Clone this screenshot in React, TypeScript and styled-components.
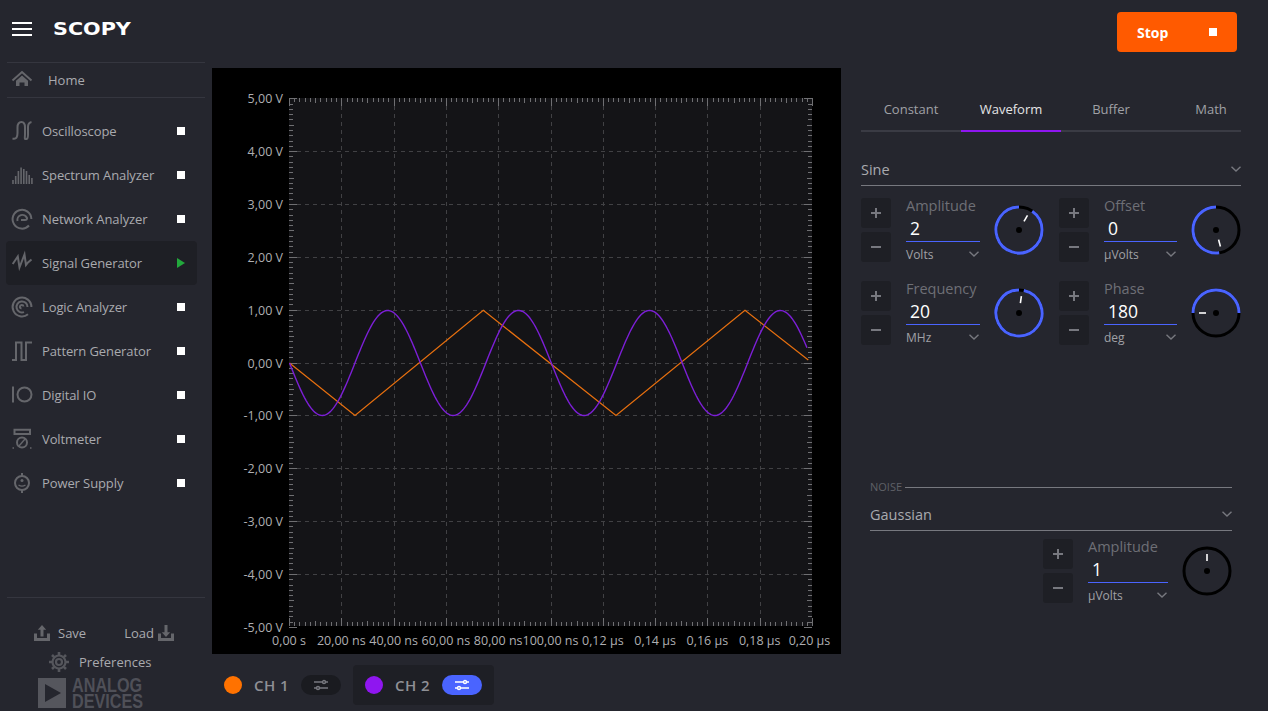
import React from "react";
import styled, { createGlobalStyle } from "styled-components";

const Global = createGlobalStyle`
  html, body { margin: 0; padding: 0; background: #25262e; }
  body { width: 1268px; height: 711px; overflow: hidden; font-family: "Open Sans", "Noto Sans", sans-serif; }
  * { box-sizing: border-box; }
`;

const ICON = "#65666b";
const BLUE = "#4a64ff";
const PURPLE = "#8f16f0";
const ORANGE = "#ff7200";

const Page = styled.div`
  display: grid;
  grid-template-columns: 212px 1fr;
  width: 1268px;
  height: 711px;
  background: #25262e;
  overflow: hidden;
`;

/* Sidebar */
const Sidebar = styled.aside`
  display: flex;
  flex-direction: column;
  height: 711px;
`;
const Brand = styled.div`
  display: flex;
  align-items: center;
  height: 63px;
  margin: 0 7px;
  padding: 0 5px 5px;
  gap: 21px;
  border-bottom: 1px solid #35363f;
`;
const Burger = styled.div`
  display: flex;
  flex-direction: column;
  gap: 4px;
  width: 20px;
  span { display: block; height: 2px; background: #fff; }
`;
const Wordmark = styled.div`
  font-family: "DejaVu Sans", sans-serif;
  font-weight: 700;
  font-size: 18px;
  line-height: 20px;
  color: #fff;
  transform: scaleX(1.15);
  transform-origin: left center;
`;
const HomeRow = styled.div`
  display: flex;
  align-items: center;
  gap: 16px;
  height: 35px;
  margin: 0 7px;
  padding-left: 5px;
  border-bottom: 1px solid #35363f;
  font-size: 13px;
  color: #a9aaae;
`;
const Nav = styled.nav`
  display: flex;
  flex-direction: column;
  margin-top: 11px;
`;
const NavItem = styled.div<{ $active?: boolean }>`
  display: flex;
  align-items: center;
  height: 44px;
  margin: 0 15px 0 6px;
  padding: 0 12px 0 6px;
  gap: 10px;
  border-radius: 4px;
  font-size: 13px;
  letter-spacing: -0.1px;
  color: #a9aaae;
  background: ${(p) => (p.$active ? "#1e1f25" : "transparent")};
  span { flex: 1; }
`;
const IconBox = styled.svg`
  width: 20px;
  height: 20px;
  flex: none;
  overflow: visible;
  fill: none;
  stroke: ${ICON};
  stroke-width: 2;
`;
const StopDot = styled.i`
  display: block;
  width: 8px;
  height: 8px;
  background: #fff;
`;
const RunDot = styled.i`
  display: block;
  width: 8px;
  height: 10px;
  background: #22a83c;
  clip-path: polygon(0 0, 100% 50%, 0 100%);
`;
const SideFoot = styled.div`
  display: flex;
  flex-direction: column;
  margin: auto 7px 0;
  padding-top: 24px;
  padding-bottom: 3px;
  border-top: 1px solid #35363f;
  font-size: 13px;
  color: #a9aaae;
`;
const SaveLoad = styled.div`
  display: flex;
  justify-content: space-between;
  align-items: center;
  height: 22px;
  padding: 0 31px 0 27px;
`;
const SmallAction = styled.div<{ $gap: number }>`
  display: flex;
  align-items: center;
  gap: ${(p) => p.$gap}px;
`;
const PrefRow = styled.div`
  display: flex;
  align-items: center;
  gap: 10px;
  height: 22px;
  margin-top: 7px;
  padding-left: 42px;
`;
const AdiLogo = styled.div`
  display: flex;
  gap: 6px;
  height: 30px;
  margin-top: 5px;
  padding-left: 31px;
`;
const AdiText = styled.div`
  width: 90px;
  font-family: "Liberation Sans", Arial, sans-serif;
  font-weight: 700;
  font-size: 19.5px;
  line-height: 15.5px;
  color: #4f5058;
  transform: scaleX(0.83);
  transform-origin: left center;
`;

/* Main */
const Main = styled.main`
  display: grid;
  grid-template-rows: 68px 586px 57px;
  grid-template-columns: 629px 427px;
`;
const TopBar = styled.header`
  grid-column: 1 / 3;
  display: flex;
  justify-content: flex-end;
  padding: 12px 31px 0 0;
`;
const StopButton = styled.div`
  display: flex;
  justify-content: space-between;
  align-items: center;
  width: 120px;
  height: 40px;
  padding: 0 20px;
  border-radius: 4px;
  background: #ff5a00;
  color: #fff;
  font-size: 14px;
  font-weight: 700;
`;
const PlotPane = styled.section`
  background: #000;
  line-height: 0;
`;
const PlotSvg = styled.svg`
  display: block;
  width: 629px;
  height: 586px;
`;
const AxisText = styled.text`
  font-family: "Open Sans", sans-serif;
  font-size: 12.5px;
  fill: #aeaeb1;
`;

/* Right panel */
const Panel = styled.section`
  display: flex;
  flex-direction: column;
  min-width: 0;
  padding: 22px 27px 51px 20px;
`;
const Tabs = styled.div`
  display: flex;
  height: 42px;
  border-bottom: 2px solid #3a3b44;
`;
const Tab = styled.div<{ $active?: boolean }>`
  flex: none;
  width: 100px;
  height: 42px;
  text-align: center;
  font-size: 13px;
  line-height: 38px;
  color: ${(p) => (p.$active ? "#e4e4e6" : "#a0a1a6")};
  border-bottom: 2px solid ${(p) => (p.$active ? PURPLE : "transparent")};
`;
const Select = styled.div`
  display: flex;
  justify-content: space-between;
  align-items: center;
  height: 31px;
  margin-top: 23px;
  padding-bottom: 2px;
  border-bottom: 1px solid #77787f;
  font-size: 14.5px;
  color: #a9aaae;
`;
const SpinGrid = styled.div`
  display: grid;
  grid-template-columns: auto auto;
  justify-content: space-between;
  row-gap: 19px;
  margin-top: 12px;
`;
const Spin = styled.div`
  display: flex;
`;
const StepCol = styled.div`
  display: flex;
  flex-direction: column;
  gap: 4px;
  margin-right: 15px;
`;
const StepBtn = styled.div`
  display: flex;
  align-items: center;
  justify-content: center;
  width: 30px;
  height: 30px;
  border-radius: 3px;
  background: #1e1f25;
`;
const Field = styled.div<{ $w: number }>`
  width: ${(p) => p.$w}px;
  margin-right: 14px;
`;
const FieldLabel = styled.div`
  height: 16px;
  font-size: 14.5px;
  line-height: 15px;
  color: #6e6f76;
`;
const FieldValue = styled.div`
  height: 28px;
  padding-left: 4px;
  border-bottom: 1px solid ${BLUE};
  font-size: 17.5px;
  line-height: 29px;
  color: #fff;
`;
const FieldUnit = styled.div`
  display: flex;
  justify-content: space-between;
  align-items: center;
  height: 20px;
  padding: 4px 1px 0 0;
  font-size: 12px;
  color: #a0a1a6;
`;
const KnobSvg = styled.svg`
  display: block;
  width: 50px;
  height: 50px;
  margin-top: 7px;
`;
const NoiseBlock = styled.div`
  display: flex;
  flex-direction: column;
  margin-top: auto;
  padding: 0 9px;
`;
const NoiseHead = styled.div`
  display: flex;
  align-items: center;
  gap: 3px;
  font-size: 11px;
  line-height: 14px;
  color: #5f6067;
  &::after { content: ""; flex: 1; height: 1px; background: #77787f; }
`;
const NoiseSelect = styled(Select)`
  margin-top: 6px;
`;
const NoiseSpin = styled(Spin)`
  justify-content: flex-end;
  margin-top: 8px;
`;

/* Bottom bar */
const ChannelBar = styled.footer`
  grid-column: 1 / 3;
  display: flex;
  padding-top: 11px;
`;
const Channel = styled.div<{ $selected?: boolean }>`
  display: flex;
  align-items: center;
  width: 141px;
  height: 40px;
  padding: 0 12px;
  gap: 12px;
  border-radius: 4px;
  background: ${(p) => (p.$selected ? "#1e1f25" : "transparent")};
`;
const Dot = styled.i<{ $c: string }>`
  display: block;
  width: 18px;
  height: 18px;
  border-radius: 50%;
  background: ${(p) => p.$c};
`;
const ChannelName = styled.span`
  font-size: 15px;
  font-weight: 600;
  letter-spacing: 0.4px;
  color: #8f9096;
`;
const Pill = styled.div<{ $on?: boolean }>`
  display: flex;
  align-items: center;
  justify-content: center;
  width: 40px;
  height: 20px;
  margin-left: auto;
  border-radius: 10px;
  background: ${(p) => (p.$on ? BLUE : "#1a1b20")};
`;

/* Icons */
const Chevron = () => (
  <svg width="10" height="6" viewBox="0 0 10 6" fill="none" stroke="#77787f" strokeWidth="1.4">
    <path d="M.5.7 5 5 9.5.7" />
  </svg>
);
const Plus = () => (
  <svg width="12" height="12" viewBox="0 0 12 12" stroke="#77787f" strokeWidth="2"><path d="M1 6h10M6 1v10" /></svg>
);
const Minus = () => (
  <svg width="12" height="12" viewBox="0 0 12 12" stroke="#77787f" strokeWidth="2"><path d="M1 6h10" /></svg>
);
const SliderGlyph = ({ c }: { c: string }) => (
  <svg width="14" height="12" viewBox="0 0 14 12" fill="none" stroke={c} strokeWidth="1.4">
    <path d="M0 3h8.500M11.500 3H14M0 9h2.500M5.500 9H14" />
    <circle cx="10" cy="3" r="1.500" />
    <circle cx="4" cy="9" r="1.500" />
  </svg>
);

const icons: Record<string, React.ReactNode> = {
  home: (
    <g>
      <path d="M.5 10.500 10 2l9.500 8.500" strokeWidth="2" />
      <path fill={ICON} stroke="none" d="M4 10.800 10 5.500l6 5.300V16h-3.500v-3.500h-5V16H4z" />
    </g>
  ),
  osc: <path d="M.5 17.500C4.500 18.500 5.500 16 5.500 12V6.500C5.500 2 8 1 9.500 1s3.500 1.500 3.500 5.500V13c0 4-1 5.500 1.500 5 2-.5 1.500-3 1.500-7V6C16 2.500 17 1.500 19.500 1" />,
  spectrum: (
    <g strokeWidth="1.600">
      <path d="M1 19v-4M3.700 19v-8M6.400 19V6M9.100 19V2.500M11.800 19V4M14.500 19V6M17.200 19V10M19.900 19v-6" />
    </g>
  ),
  network: (
    <g>
      <path d="M17 16.500A9.400 9.400 0 1 1 19.400 10" />
      <path d="M5.500 12A5 5 0 0 1 15 9c.3 1.300-.6 2-2 2H9" />
    </g>
  ),
  siggen: <path d="M.7 11 5.800 3.500 7.500 14.500 12.500 1.500 14 12l2-2.500 3.500-3" />,
  logic: (
    <g>
      <path d="M19.400 10A9.400 9.400 0 1 0 16 17.200" />
      <path d="M15.500 10A5.500 5.500 0 1 0 12 15.100" />
      <path d="M9.500 11.500A1.800 1.800 0 1 1 11.500 9.500" />
    </g>
  ),
  pattern: <path d="M0 19H4V1.500h5.500V19H14V1.500H20" />,
  dio: (
    <g>
      <path d="M1 1.500v16" />
      <circle cx="12.500" cy="9.500" r="7" />
    </g>
  ),
  volt: (
    <g>
      <path d="M2.500 .7h15.500v4.300H2.500z" />
      <circle cx="10" cy="13.500" r="5" />
      <path d="M7 17l6-7" strokeWidth="1.400" />
      <path d="M.5 19h1.500M18 19h1.500" strokeWidth="1.400" />
    </g>
  ),
  power: (
    <g>
      <circle cx="10" cy="10" r="7" />
      <path d="M10 0v3M10 17v3" />
      <circle cx="10" cy="7.500" r="1.500" fill={ICON} stroke="none" />
      <path d="M6.500 12c2 1.300 5 1.300 7 0" strokeWidth="1.400" />
    </g>
  ),
  gear: (
    <g stroke="#55565c" strokeWidth="2.200">
      <circle cx="10" cy="10" r="3" />
      <circle cx="10" cy="10" r="6.500" />
      <path d="M10 0v3M10 17v3M0 10h3M17 10h3M3 3l2.200 2.200M14.800 14.800 17 17M17 3l-2.200 2.200M5.200 14.800 3 17" strokeWidth="2.600" />
    </g>
  ),
};
const Ico = ({ name }: { name: string }) => (
  <IconBox viewBox="0 0 20 20">{icons[name]}</IconBox>
);
const Upload = () => (
  <svg width="16" height="16" viewBox="0 0 16 16" fill={ICON}>
    <path d="M0 8.500h3v4.500h10V8.500h3V16H0z" />
    <path d="M8 0l4.200 4.800H9.500V11.500h-3V4.800H3.800z" />
  </svg>
);
const Download = () => (
  <svg width="16" height="16" viewBox="0 0 16 16" fill={ICON}>
    <path d="M0 8.500h3v4.500h10V8.500h3V16H0z" />
    <path d="M8 12 3.800 7.200H6.500V0h3v7.200h2.700z" />
  </svg>
);

/* Knob */
const polar = (r: number, deg: number) => {
  const a = ((deg - 90) * Math.PI) / 180;
  return [25 + r * Math.cos(a), 25 + r * Math.sin(a)];
};
const Knob = ({ from, to, tick }: { from?: number; to?: number; tick: number }) => {
  const r = 23;
  let arc = "";
  if (from !== undefined && to !== undefined) {
    const [x1, y1] = polar(r, from);
    const [x2, y2] = polar(r, to);
    arc = `M${x1} ${y1}A${r} ${r} 0 ${to - from > 180 ? 1 : 0} 1 ${x2} ${y2}`;
  }
  const [tx1, ty1] = polar(10, tick);
  const [tx2, ty2] = polar(17, tick);
  return (
    <KnobSvg viewBox="0 0 50 50">
      <circle cx="25" cy="25" r={r} fill="none" stroke="#000" strokeWidth="3" />
      {arc && <path d={arc} fill="none" stroke={BLUE} strokeWidth="3" />}
      <circle cx="25" cy="25" r="3" fill="#000" />
      <path d={`M${tx1} ${ty1}L${tx2} ${ty2}`} stroke="#fff" strokeWidth="1.600" />
    </KnobSvg>
  );
};

const SpinBox = ({ label, value, unit, w, knob }: {
  label: string; value: string; unit: string; w: number;
  knob: { from?: number; to?: number; tick: number };
}) => (
  <>
    <StepCol>
      <StepBtn><Plus /></StepBtn>
      <StepBtn><Minus /></StepBtn>
    </StepCol>
    <Field $w={w}>
      <FieldLabel>{label}</FieldLabel>
      <FieldValue>{value}</FieldValue>
      <FieldUnit>{unit}<Chevron /></FieldUnit>
    </Field>
    <Knob {...knob} />
  </>
);

/* Plot */
const L = 289, R = 812, T = 98, B = 626;
const xs = Array.from({ length: 11 }, (_, i) => L + (i * (R - L)) / 10);
const ys = Array.from({ length: 11 }, (_, i) => T + 0.3 + i * 52.85);
const snap = (v: number) => Math.round(v) + 0.5;
const yLabels = ["5,00 V", "4,00 V", "3,00 V", "2,00 V", "1,00 V", "0,00 V", "-1,00 V", "-2,00 V", "-3,00 V", "-4,00 V", "-5,00 V"];
const xLabels = ["0,00 s", "20,00 ns", "40,00 ns", "60,00 ns", "80,00 ns", "100,00 ns", "0,12 µs", "0,14 µs", "0,16 µs", "0,18 µs", "0,20 µs"];

const sine = (() => {
  const pts: string[] = [];
  for (let x = 289.5; x <= 808; x += 1.5) {
    pts.push(`${x.toFixed(1)},${(363 + 52.5 * Math.sin((2 * Math.PI * (x - 289.5)) / 130.9)).toFixed(2)}`);
  }
  return pts.join(" ");
})();

const Plot = () => {
  const ticks: string[] = [];
  for (let i = 0; i < 10; i++) {
    for (let j = 0; j <= 10; j++) {
      const len = j === 0 || j === 10 ? 8 : j === 5 ? 5 : 4;
      const x = snap(xs[i] + (j * (xs[1] - xs[0])) / 10);
      const y = snap(ys[i] + (j * (ys[1] - ys[0])) / 10);
      ticks.push(`M${x} ${T}v${len}M${x} ${B}v${-len}M${L} ${y}h${len}M${R} ${y}h${-len}`);
    }
  }
  return (
    <PlotSvg viewBox="212 68 629 586">
      <rect x={L} y={T} width={R - L} height={B - T} fill="#141417" />
      <g stroke="#414144" strokeDasharray="4 4" fill="none">
        {xs.slice(1, 10).map((x) => <path key={x} d={`M${snap(x)} ${T}V${B}`} />)}
        {ys.slice(1, 10).map((y) => <path key={y} d={`M${L} ${snap(y)}H${R}`} />)}
      </g>
      <path d={ticks.join("")} stroke="#6f6f72" fill="none" />
      <polyline points="289.500,363 355,415.500 483.300,310.300 616,415.500 745,310.300 808.300,360" fill="none" stroke="#e8700f" strokeWidth="1.200" />
      <polyline points={sine} fill="none" stroke="#7c1fd6" strokeWidth="1.400" />
      {yLabels.map((t, i) => (
        <AxisText key={t} x={283} y={ys[i] + 5} textAnchor="end">{t}</AxisText>
      ))}
      {xLabels.map((t, i) => (
        <AxisText key={t} x={i === 10 ? 809.5 : xs[i]} y={644.5} textAnchor="middle">{t}</AxisText>
      ))}
    </PlotSvg>
  );
};

const tools: [string, string][] = [
  ["osc", "Oscilloscope"],
  ["spectrum", "Spectrum Analyzer"],
  ["network", "Network Analyzer"],
  ["siggen", "Signal Generator"],
  ["logic", "Logic Analyzer"],
  ["pattern", "Pattern Generator"],
  ["dio", "Digital IO"],
  ["volt", "Voltmeter"],
  ["power", "Power Supply"],
];

export default function App() {
  return (
    <Page>
      <Global />
      <Sidebar>
        <Brand>
          <Burger><span /><span /><span /></Burger>
          <Wordmark>SCOPY</Wordmark>
        </Brand>
        <HomeRow><Ico name="home" />Home</HomeRow>
        <Nav>
          {tools.map(([icon, name]) => {
            const active = name === "Signal Generator";
            return (
              <NavItem key={name} $active={active}>
                <Ico name={icon} />
                <span>{name}</span>
                {active ? <RunDot /> : <StopDot />}
              </NavItem>
            );
          })}
        </Nav>
        <SideFoot>
          <SaveLoad>
            <SmallAction $gap={8}><Upload />Save</SmallAction>
            <SmallAction $gap={4}>Load<Download /></SmallAction>
          </SaveLoad>
          <PrefRow><Ico name="gear" />Preferences</PrefRow>
          <AdiLogo>
            <svg width="28" height="30" viewBox="0 0 28 30">
              <rect width="28" height="30" fill="#55565d" />
              <path d="M7 6 23 15 7 24z" fill="#25262e" />
            </svg>
            <AdiText>ANALOG DEVICES</AdiText>
          </AdiLogo>
        </SideFoot>
      </Sidebar>
      <Main>
        <TopBar>
          <StopButton>Stop<StopDot /></StopButton>
        </TopBar>
        <PlotPane><Plot /></PlotPane>
        <Panel>
          <Tabs>
            <Tab>Constant</Tab>
            <Tab $active>Waveform</Tab>
            <Tab>Buffer</Tab>
            <Tab>Math</Tab>
          </Tabs>
          <Select>Sine<Chevron /></Select>
          <SpinGrid>
            <Spin><SpinBox label="Amplitude" value="2" unit="Volts" w={74} knob={{ from: 35, to: 360, tick: 30 }} /></Spin>
            <Spin><SpinBox label="Offset" value="0" unit="µVolts" w={73} knob={{ from: 172, to: 360, tick: 165 }} /></Spin>
            <Spin><SpinBox label="Frequency" value="20" unit="MHz" w={74} knob={{ from: 12, to: 360, tick: 8 }} /></Spin>
            <Spin><SpinBox label="Phase" value="180" unit="deg" w={73} knob={{ from: -90, to: 90, tick: 270 }} /></Spin>
          </SpinGrid>
          <NoiseBlock>
            <NoiseHead>NOISE</NoiseHead>
            <NoiseSelect>Gaussian<Chevron /></NoiseSelect>
            <NoiseSpin><SpinBox label="Amplitude" value="1" unit="µVolts" w={80} knob={{ tick: 0 }} /></NoiseSpin>
          </NoiseBlock>
        </Panel>
        <ChannelBar>
          <Channel>
            <Dot $c={ORANGE} />
            <ChannelName>CH 1</ChannelName>
            <Pill><SliderGlyph c="#77787f" /></Pill>
          </Channel>
          <Channel $selected>
            <Dot $c={PURPLE} />
            <ChannelName>CH 2</ChannelName>
            <Pill $on><SliderGlyph c="#fff" /></Pill>
          </Channel>
        </ChannelBar>
      </Main>
    </Page>
  );
}
